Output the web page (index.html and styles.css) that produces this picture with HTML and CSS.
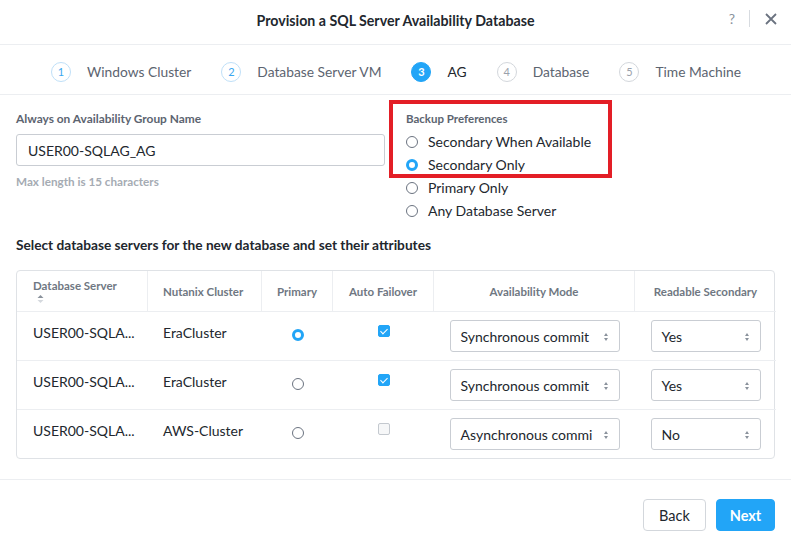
FILE: index.html
```html
<!DOCTYPE html>
<html>
<head>
<meta charset="utf-8">
<link rel="stylesheet" href="styles.css">
</head>
<body>
<div class="modal">
  <div class="header">
    <div class="title">Provision a SQL Server Availability Database</div>
    <div class="header-actions">
      <span class="help">?</span>
      <span class="divider"></span>
      <svg class="close" width="12" height="12" viewBox="0 0 12 12"><path d="M1 1L11 11M11 1L1 11" stroke="#6b7380" stroke-width="1.8" fill="none"/></svg>
    </div>
  </div>
  <div class="steps">
    <div class="step done"><span class="num">1</span><span class="lbl">Windows Cluster</span></div>
    <div class="step done"><span class="num">2</span><span class="lbl">Database Server VM</span></div>
    <div class="step active"><span class="num">3</span><span class="lbl">AG</span></div>
    <div class="step"><span class="num">4</span><span class="lbl">Database</span></div>
    <div class="step"><span class="num">5</span><span class="lbl">Time Machine</span></div>
  </div>
  <div class="body">
    <div class="form-row">
      <div class="field">
        <div class="label">Always on Availability Group Name</div>
        <div class="input">USER00-SQLAG_AG</div>
        <div class="hint">Max length is 15 characters</div>
      </div>
      <div class="backup">
        <div class="label">Backup Preferences</div>
        <div class="radio-opt"><span class="radio"></span>Secondary When Available</div>
        <div class="radio-opt"><span class="radio on"></span>Secondary Only</div>
        <div class="radio-opt"><span class="radio"></span>Primary Only</div>
        <div class="radio-opt"><span class="radio"></span>Any Database Server</div>
        <div class="highlight"></div>
      </div>
    </div>
    <div class="section-title">Select database servers for the new database and set their attributes</div>
    <div class="table">
      <div class="th first">Database Server<span class="sort"><svg width="7" height="10" viewBox="0 0 7 10"><path d="M0.5 4L3.5 1L6.5 4Z" fill="#8a929c"/><path d="M0.5 6L3.5 9L6.5 6Z" fill="#d5d9de"/></svg></span></div>
      <div class="th left">Nutanix Cluster</div>
      <div class="th">Primary</div>
      <div class="th">Auto Failover</div>
      <div class="th">Availability Mode</div>
      <div class="th last">Readable Secondary</div>

      <div class="td name">USER00-SQLA...</div>
      <div class="td cl">EraCluster</div>
      <div class="td ctr"><span class="radio on"></span></div>
      <div class="td ctr"><span class="check on"></span></div>
      <div class="td sel"><div class="select wide">Synchronous commit<span class="arr"></span></div></div>
      <div class="td sel"><div class="select narrow">Yes<span class="arr"></span></div></div>

      <div class="td name">USER00-SQLA...</div>
      <div class="td cl">EraCluster</div>
      <div class="td ctr"><span class="radio"></span></div>
      <div class="td ctr"><span class="check on"></span></div>
      <div class="td sel"><div class="select wide">Synchronous commit<span class="arr"></span></div></div>
      <div class="td sel"><div class="select narrow">Yes<span class="arr"></span></div></div>

      <div class="td name lastrow">USER00-SQLA...</div>
      <div class="td cl lastrow">AWS-Cluster</div>
      <div class="td ctr lastrow"><span class="radio"></span></div>
      <div class="td ctr lastrow"><span class="check"></span></div>
      <div class="td sel lastrow"><div class="select wide">Asynchronous commi<span class="arr"></span></div></div>
      <div class="td sel lastrow"><div class="select narrow">No<span class="arr"></span></div></div>
    </div>
  </div>
  <div class="footer">
    <button class="btn back">Back</button>
    <button class="btn next">Next</button>
  </div>
</div>
</body>
</html>
```
FILE: styles.css
```css
* { box-sizing: border-box; }
html, body { margin: 0; padding: 0; background: #fff; }
body {
  font-family: "Lato", "Open Sans", sans-serif;
  color: #22272e;
  width: 791px;
  height: 548px;
  overflow: hidden;
}
.modal { width: 791px; }
.header {
  height: 45px;
  border-bottom: 1px solid #eceef1;
  display: flex;
  align-items: center;
  justify-content: center;
  position: relative;
}
.title { font-size: 14.2px; font-weight: 700; color: #22272e; margin-top: -4px; }
.header-actions {
  position: absolute;
  right: 14px;
  top: 10px;
  display: flex;
  align-items: center;
}
.help { color: #8a929c; font-size: 14px; }
.divider { width: 1px; height: 17px; background: #d7dbe0; margin: 0 15px 0 14px; }
.close { display: block; }

.steps {
  height: 50px;
  border-bottom: 1px solid #eceef1;
  display: flex;
  justify-content: center;
  align-items: center;
  gap: 30px;
  padding-left: 1px;
  padding-top: 4px;
}
.step { display: flex; align-items: center; gap: 16px; font-size: 13.8px; color: #5c6470; }
.step .num {
  width: 20px; height: 20px; border-radius: 50%;
  border: 1px solid #d3d7dc;
  color: #9aa1ab;
  font-size: 11px;
  display: flex; align-items: center; justify-content: center;
}
.step.done .num { border-color: #bfe0f8; color: #3aa7f0; }
.step.active .num { background: #22a5f7; border-color: #22a5f7; color: #fff; font-weight: 700; }
.step.active .lbl { color: #22272e; }

.body { padding: 0 16px; }
.form-row { display: flex; padding-top: 17px; height: 142px; }
.field { width: 369px; }
.label { font-size: 11.9px; font-weight: 700; color: #5c6470; line-height: 14px; }
.input {
  margin-top: 8px;
  height: 32px;
  border: 1px solid #c9cdd3;
  border-radius: 3px;
  font-size: 14px;
  padding: 0 11px;
  display: flex; align-items: center;
  color: #22272e;
}
.hint { margin-top: 8px; font-size: 11.7px; font-weight: 700; color: #a5abb3; }
.backup { margin-left: 21px; position: relative; }
.backup .label { font-size: 11.5px; margin-bottom: 4px; }
.radio-opt {
  display: flex; align-items: center;
  font-size: 14px; height: 23px; color: #22272e;
}
.radio-opt .radio { margin-right: 10px; }
.radio {
  display: inline-block;
  width: 12px; height: 12px; border-radius: 50%;
  border: 1.3px solid #6b7380;
  background: #fff;
  flex: none;
}
.radio.on {
  border: 3.5px solid #22a5f7;
  background: #fff;
}
.highlight {
  position: absolute;
  left: -17px; top: -12px;
  width: 223px; height: 78px;
  border: 4px solid #e31e26;
  pointer-events: none;
}
.section-title { font-size: 13.7px; font-weight: 700; color: #22272e; line-height: 16px; }
.table {
  margin-top: 17px;
  display: grid;
  grid-template-columns: 131px 114px 71px 101px 201px 141px;
  border: 1px solid #dfe2e6;
  border-radius: 4px;
  width: 759px;
}
.th {
  height: 41px;
  border-bottom: 1px solid #eceef1;
  border-right: 1px solid #eceef1;
  font-size: 11.5px; font-weight: 700; color: #6f7782;
  display: flex; align-items: center; justify-content: center;
}
.th.left { justify-content: flex-start; padding-left: 15px; }
.th.first { justify-content: flex-start; align-items: flex-start; flex-direction: column; padding: 8px 0 0 16px; }
.th.last { border-right: none; }
.sort { display: block; margin: 2px 0 0 4px; line-height: 0; }
.td {
  height: 49px;
  border-bottom: 1px solid #eceef1;
  font-size: 14px;
  display: flex;
  align-items: flex-start;
  padding-top: 12px;
}
.td.lastrow { border-bottom: none; height: 48px; }
.td.name { padding-left: 16px; }
.td.cl { padding-left: 15px; }
.td.ctr { justify-content: center; padding-top: 16px; }
.td.ctr .radio { margin-top: 1px; }
.td.sel { justify-content: center; padding-top: 8px; }
.check {
  display: inline-block; width: 12px; height: 12px; border-radius: 2px;
  border: 1px solid #c4c9cf; background: #f6f7f8;
  position: relative; margin-top: -3px;
}
.check.on { background: #22a5f7; border-color: #22a5f7; }
.check.on::after {
  content: ""; position: absolute; left: 3.5px; top: 1px;
  width: 3px; height: 6px;
  border: solid #fff; border-width: 0 1.6px 1.6px 0;
  transform: rotate(45deg);
}
.select {
  height: 32px;
  border: 1px solid #c9cdd3;
  border-radius: 3px;
  display: flex; align-items: center;
  padding: 0 10px;
  position: relative;
  font-size: 14px;
  color: #22272e;
  white-space: nowrap;
}
.select.wide { width: 170px; }
.select.narrow { width: 110px; }
.arr {
  position: absolute; right: 10px; top: 12px;
  width: 5px; height: 8px;
}
.arr::before, .arr::after {
  content: ""; position: absolute; left: 0;
  border-left: 2.5px solid transparent; border-right: 2.5px solid transparent;
}
.arr::before { top: 0; border-bottom: 3px solid #8a929c; }
.arr::after { bottom: 0; border-top: 3px solid #8a929c; }
.footer {
  margin-top: 20px;
  border-top: 1px solid #eceef1;
  height: 70px;
  display: flex;
  justify-content: flex-end;
  align-items: flex-start;
  padding: 19px 16px 0 0;
  gap: 10px;
}
.btn {
  height: 32px;
  border-radius: 4px;
  font-family: "Lato", sans-serif;
  font-size: 14.5px;
  padding: 0;
}
.btn.back { width: 63px; background: #fff; border: 1px solid #d3d7dc; color: #22272e; }
.btn.next { width: 59px; background: #22a5f7; border: 1px solid #22a5f7; color: #fff; font-weight: 700; }
```
